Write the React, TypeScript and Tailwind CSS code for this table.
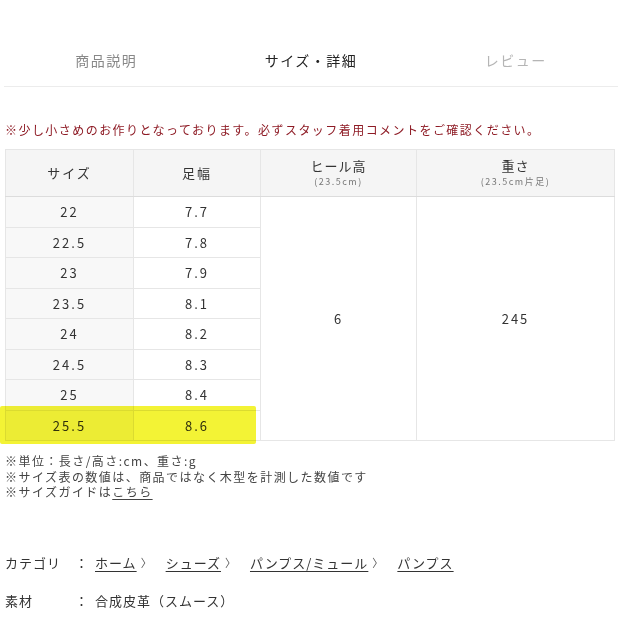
import React from 'react';

const rows = [
    ['22', '7.7'],
    ['22.5', '7.8'],
    ['23', '7.9'],
    ['23.5', '8.1'],
    ['24', '8.2'],
    ['24.5', '8.3'],
    ['25', '8.4'],
    ['25.5', '8.6'],
];

const crumbs = ['ホーム', 'シューズ', 'パンプス/ミュール', 'パンプス'];

const App = () => {
    return (
        <div className="w-[622px] h-[622px] bg-white text-[#333] overflow-hidden" style={{ fontFamily: '"Noto Sans CJK JP", "Noto Sans", sans-serif' }}>
            {/* tabs */}
            <div className="pt-[38px] px-[4px]">
                <div className="grid grid-cols-3 h-[49px] border-b border-[#ececec] text-[14px] tracking-[1.5px]">
                    <div className="flex items-center justify-center text-[#888] pb-[4px]">商品説明</div>
                    <div className="flex items-center justify-center text-[#222] pb-[4px]">サイズ・詳細</div>
                    <div className="flex items-center justify-center text-[#b5b5b5] pb-[4px]">レビュー</div>
                </div>
            </div>

            <div className="px-[5px]">
                <p className="mt-[35px] text-[12px] leading-[16px] tracking-[1.45px] text-[#8e1b25]">
                    ※少し小さめのお作りとなっております。必ずスタッフ着用コメントをご確認ください。
                </p>

                <div className="relative mt-[11px] w-[609px]">
                    <table className="w-[609px] border-collapse table-fixed text-[13px] tracking-[2px] text-[#333]">
                        <colgroup>
                            <col className="w-[128px]" />
                            <col className="w-[127px]" />
                            <col className="w-[156px]" />
                            <col className="w-[198px]" />
                        </colgroup>
                        <thead>
                            <tr className="h-[47px] bg-[#f5f5f5]">
                                <th className="border border-[#e6e6e6] border-b-[#dcdcdc] font-normal text-center">サイズ</th>
                                <th className="border border-[#e6e6e6] border-b-[#dcdcdc] font-normal text-center">足幅</th>
                                <th className="border border-[#e6e6e6] border-b-[#dcdcdc] font-normal text-center align-middle">
                                    <div className="leading-[18px] tracking-[1px]">ヒール高</div>
                                    <div className="text-[9px] leading-[14px] tracking-[1.5px] text-[#777]">(23.5cm)</div>
                                </th>
                                <th className="border border-[#e6e6e6] border-b-[#dcdcdc] font-normal text-center align-middle">
                                    <div className="leading-[18px] tracking-[1px]">重さ</div>
                                    <div className="text-[9px] leading-[14px] tracking-[1.5px] text-[#777]">(23.5cm片足)</div>
                                </th>
                            </tr>
                        </thead>
                        <tbody>
                            {rows.map((r, i) => (
                                <tr key={r[0]} className="h-[30.5px]">
                                    <td className="border border-[#e6e6e6] bg-[#f8f8f8] text-center">{r[0]}</td>
                                    <td className="border border-[#e6e6e6] bg-white text-center">{r[1]}</td>
                                    {i === 0 && (
                                        <>
                                            <td rowSpan={8} className="border border-[#e6e6e6] text-center">6</td>
                                            <td rowSpan={8} className="border border-[#e6e6e6] text-center">245</td>
                                        </>
                                    )}
                                </tr>
                            ))}
                        </tbody>
                    </table>
                    {/* marker highlight */}
                    <div className="absolute left-[-5px] bottom-[-3px] w-[256px] h-[38px] bg-[#f3f335] mix-blend-multiply rounded-[2px] blur-[0.6px]"></div>
                </div>

                <div className="mt-[12px] text-[12px] leading-[15.5px] tracking-[1.45px] text-[#444]">
                    <p>※単位：長さ/高さ:cm、重さ:g</p>
                    <p>※サイズ表の数値は、商品ではなく木型を計測した数値です</p>
                    <p>※サイズガイドは<span className="underline underline-offset-2">こちら</span></p>
                </div>

                <div className="mt-[53px] text-[13px] tracking-[1px] text-[#333] flex items-center h-[20px]">
                    <span className="w-[70px]">カテゴリ</span>
                    <span className="w-[20px]">：</span>
                    {crumbs.map((c, i) => (
                        <span key={c} className="flex items-center">
                            <span className="underline underline-offset-[3px]">{c}</span>
                            {i < crumbs.length - 1 && <span className="text-[11px] ml-[4px] mr-[13px] text-[#555]">〉</span>}
                        </span>
                    ))}
                </div>

                <div className="mt-[18px] text-[13px] tracking-[1px] text-[#333] flex items-center h-[20px]">
                    <span className="w-[70px]">素材</span>
                    <span className="w-[20px]">：</span>
                    <span>合成皮革（スムース）</span>
                </div>
            </div>
        </div>
    );
};

export default App;
